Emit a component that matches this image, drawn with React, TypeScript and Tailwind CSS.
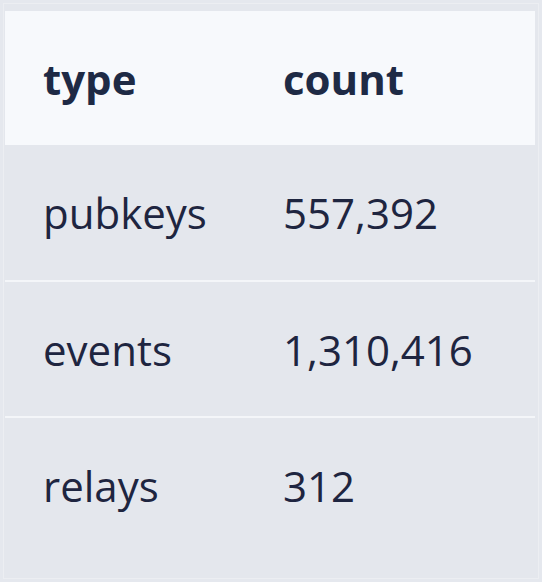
import React from 'react';

const rows = [
  { type: 'pubkeys', count: '557,392' },
  { type: 'events', count: '1,310,416' },
  { type: 'relays', count: '312' },
];

export default function App() {
  return (
    <div
      className="w-[542px] h-[582px] bg-[#e5e8ee] p-[3px] text-[#1e2540]"
      style={{ fontFamily: '"Open Sans", "Noto Sans", sans-serif' }}
    >
      <div className="h-full border border-[#eceef2] bg-[#e4e7ed] pt-[7px] pl-[1px] pr-[2px]">
        <table className="w-[530px] table-fixed border-collapse text-left text-[42px]">
          <thead>
            <tr className="h-[134px] bg-[#f7f9fc]">
              <th className="w-[278px] pl-[38px] font-bold text-[#1e2a45]">type</th>
              <th className="font-bold text-[#1e2a45]">count</th>
            </tr>
          </thead>
          <tbody>
            {rows.map((r, i) => (
              <tr key={r.type} className={`h-[136px] ${i < rows.length - 1 ? 'border-b-2 border-[#f4f6f9]' : ''}`}>
                <td className="pl-[38px] font-normal">{r.type}</td>
                <td className="font-normal">{r.count}</td>
              </tr>
            ))}
          </tbody>
        </table>
      </div>
    </div>
  );
}
